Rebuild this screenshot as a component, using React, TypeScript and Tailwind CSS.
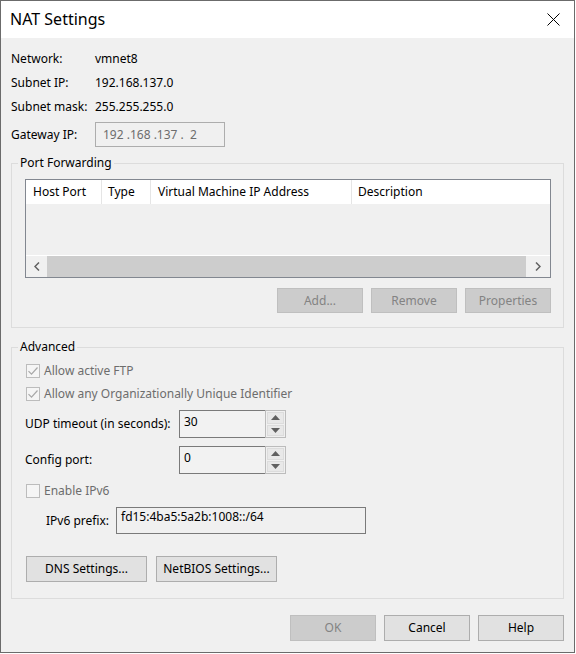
import React from "react";

function Btn({ w = "w-[86px]", h = "h-[25px]", disabled = false, children }: { w?: string; h?: string; disabled?: boolean; children: React.ReactNode }) {
  return (
    <div
      className={
        (disabled
          ? "bg-[#cccccc] border-[#bfbfbf] text-[#838383] "
          : "bg-[#e1e1e1] border-[#adadad] text-black ") +
        w + " " + h + " border flex items-center justify-center leading-none shrink-0"
      }
    >
      {children}
    </div>
  );
}

function Check({ checked, label }: { checked: boolean; label: string }) {
  return (
    <div className="h-[23px] flex items-center">
      <div className="ml-[1px] w-[14px] h-[14px] border border-[#bcbcbc] bg-[#f5f5f5] flex items-center justify-center">
        {checked && (
          <svg width="12" height="12" viewBox="0 0 12 12">
            <path d="M1.5 6.2 L4.5 9.2 L10.5 2.5" fill="none" stroke="#a8a8a8" strokeWidth="1.2" />
          </svg>
        )}
      </div>
      <span className="ml-[4px] text-[#6d6d6d]">{label}</span>
    </div>
  );
}

function Spin({ value }: { value: string }) {
  return (
    <div className="flex h-[28px] w-[107px] shrink-0">
      <div className="flex-1 border border-r-0 border-[#7a7a7a] bg-[#f2f2f2] pl-[4px] pt-[3px] leading-[16px]">{value}</div>
      <div className="w-[21px] border border-[#bcbcbc] bg-[#f0f0f0] flex flex-col p-[1px] gap-[1px]">
        <div className="flex-1 bg-[#e8e8e8] border border-[#dcdcdc] flex items-center justify-center">
          <svg width="9" height="5" viewBox="0 0 9 5"><path d="M0 5 L4.5 0 L9 5 Z" fill="#606060" /></svg>
        </div>
        <div className="flex-1 bg-[#e8e8e8] border border-[#dcdcdc] flex items-center justify-center">
          <svg width="9" height="5" viewBox="0 0 9 5"><path d="M0 0 L4.5 5 L9 0 Z" fill="#606060" /></svg>
        </div>
      </div>
    </div>
  );
}

export default function App() {
  return (
    <div className="w-[576px] h-[654px] bg-white">
      <div className="w-[575px] h-[653px] bg-[#f0f0f0] border border-[#6b6b6b] flex flex-col font-['Noto_Sans',sans-serif] text-[12px] text-black">
        {/* title bar */}
        <div className="h-[37px] bg-white flex items-center justify-between shrink-0">
          <div className="pl-[9px] text-[16px] leading-none pb-[1px]">NAT Settings</div>
          <svg className="mr-[14px]" width="13" height="13" viewBox="0 0 13 13">
            <path d="M0.5 0.5 L12.5 12.5 M12.5 0.5 L0.5 12.5" stroke="#000" strokeWidth="1" />
          </svg>
        </div>

        <div className="pl-[10px] pr-[10px] flex flex-col">
          {/* info */}
          <div className="mt-[9px] h-[24px] flex items-center">
            <div className="w-[84px]">Network:</div>
            <div>vmnet8</div>
          </div>
          <div className="h-[24px] flex items-center">
            <div className="w-[84px]">Subnet IP:</div>
            <div>192.168.137.0</div>
          </div>
          <div className="h-[24px] flex items-center">
            <div className="w-[84px]">Subnet mask:</div>
            <div>255.255.255.0</div>
          </div>
          <div className="mt-[3px] h-[25px] flex items-center">
            <div className="w-[84px]">Gateway IP:</div>
            <div className="w-[130px] h-[25px] border border-[#adadad] flex items-center pl-[7px] text-[#6d6d6d] whitespace-pre">
              192 .168 .137 .  2
            </div>
          </div>

          {/* Port forwarding */}
          <fieldset className="mt-[8px] border border-[#dcdcdc] p-0 m-0">
            <legend className="ml-[6px] px-[2px] leading-[16px]">Port Forwarding</legend>
            <div className="pl-[13px] pr-[12px] pt-[8px] pb-[14px] flex flex-col">
              <div className="h-[99px] border border-[#828790] bg-[#f0f0f0] flex flex-col">
                <div className="h-[24px] bg-white flex shrink-0">
                  <div className="w-[76px] border-r border-[#e5e5e5] pl-[7px] flex items-center">Host Port</div>
                  <div className="w-[49px] border-r border-[#e5e5e5] pl-[6px] flex items-center">Type</div>
                  <div className="w-[201px] border-r border-[#e5e5e5] pl-[7px] flex items-center">Virtual Machine IP Address</div>
                  <div className="flex-1 pl-[6px] flex items-center">Description</div>
                </div>
                <div className="flex-1" />
                <div className="h-[22px] border-t border-white flex shrink-0 bg-[#f0f0f0]">
                  <div className="w-[21px] flex items-center justify-center">
                    <svg width="6" height="9" viewBox="0 0 6 9"><path d="M5 0.5 L1 4.5 L5 8.5" fill="none" stroke="#606060" strokeWidth="1.5" /></svg>
                  </div>
                  <div className="flex-1 bg-[#cdcdcd]" />
                  <div className="w-[24px] flex items-center justify-center">
                    <svg width="6" height="9" viewBox="0 0 6 9"><path d="M1 0.5 L5 4.5 L1 8.5" fill="none" stroke="#606060" strokeWidth="1.5" /></svg>
                  </div>
                </div>
              </div>
              <div className="mt-[10px] flex justify-end gap-[8px]">
                <Btn disabled>Add...</Btn>
                <Btn disabled>Remove</Btn>
                <Btn disabled>Properties</Btn>
              </div>
            </div>
          </fieldset>

          {/* Advanced */}
          <fieldset className="mt-[11px] border border-[#dcdcdc] p-0 m-0">
            <legend className="ml-[6px] px-[2px] leading-[16px]">Advanced</legend>
            <div className="pl-[13px] pr-[12px] pt-[4px] pb-[16px] flex flex-col">
              <Check checked label="Allow active FTP" />
              <Check checked label="Allow any Organizationally Unique Identifier" />
              <div className="mt-[5px] flex items-center">
                <div className="w-[154px] shrink-0">UDP timeout (in seconds):</div>
                <Spin value="30" />
              </div>
              <div className="mt-[8px] flex items-center">
                <div className="w-[154px] shrink-0">Config port:</div>
                <Spin value="0" />
              </div>
              <div className="mt-[5px]">
                <Check checked={false} label="Enable IPv6" />
              </div>
              <div className="mt-[5px] flex items-center">
                <div className="w-[91px] shrink-0 pl-[21px] whitespace-nowrap">IPv6 prefix:</div>
                <div className="w-[250px] h-[27px] shrink-0 border border-[#7a7a7a] pl-[4px] pt-[1px] leading-[16px]">fd15:4ba5:5a2b:1008::/64</div>
              </div>
              <div className="mt-[22px] flex gap-[9px]">
                <Btn w="w-[121px] ml-[1px]" h="h-[26px]">DNS Settings...</Btn>
                <Btn w="w-[121px]" h="h-[26px]">NetBIOS Settings...</Btn>
              </div>
            </div>
          </fieldset>

          {/* footer */}
          <div className="mt-[16px] flex justify-end gap-[8px]">
            <Btn disabled h="h-[26px]">OK</Btn>
            <Btn h="h-[26px]">Cancel</Btn>
            <Btn h="h-[26px]">Help</Btn>
          </div>
        </div>
      </div>
    </div>
  );
}
